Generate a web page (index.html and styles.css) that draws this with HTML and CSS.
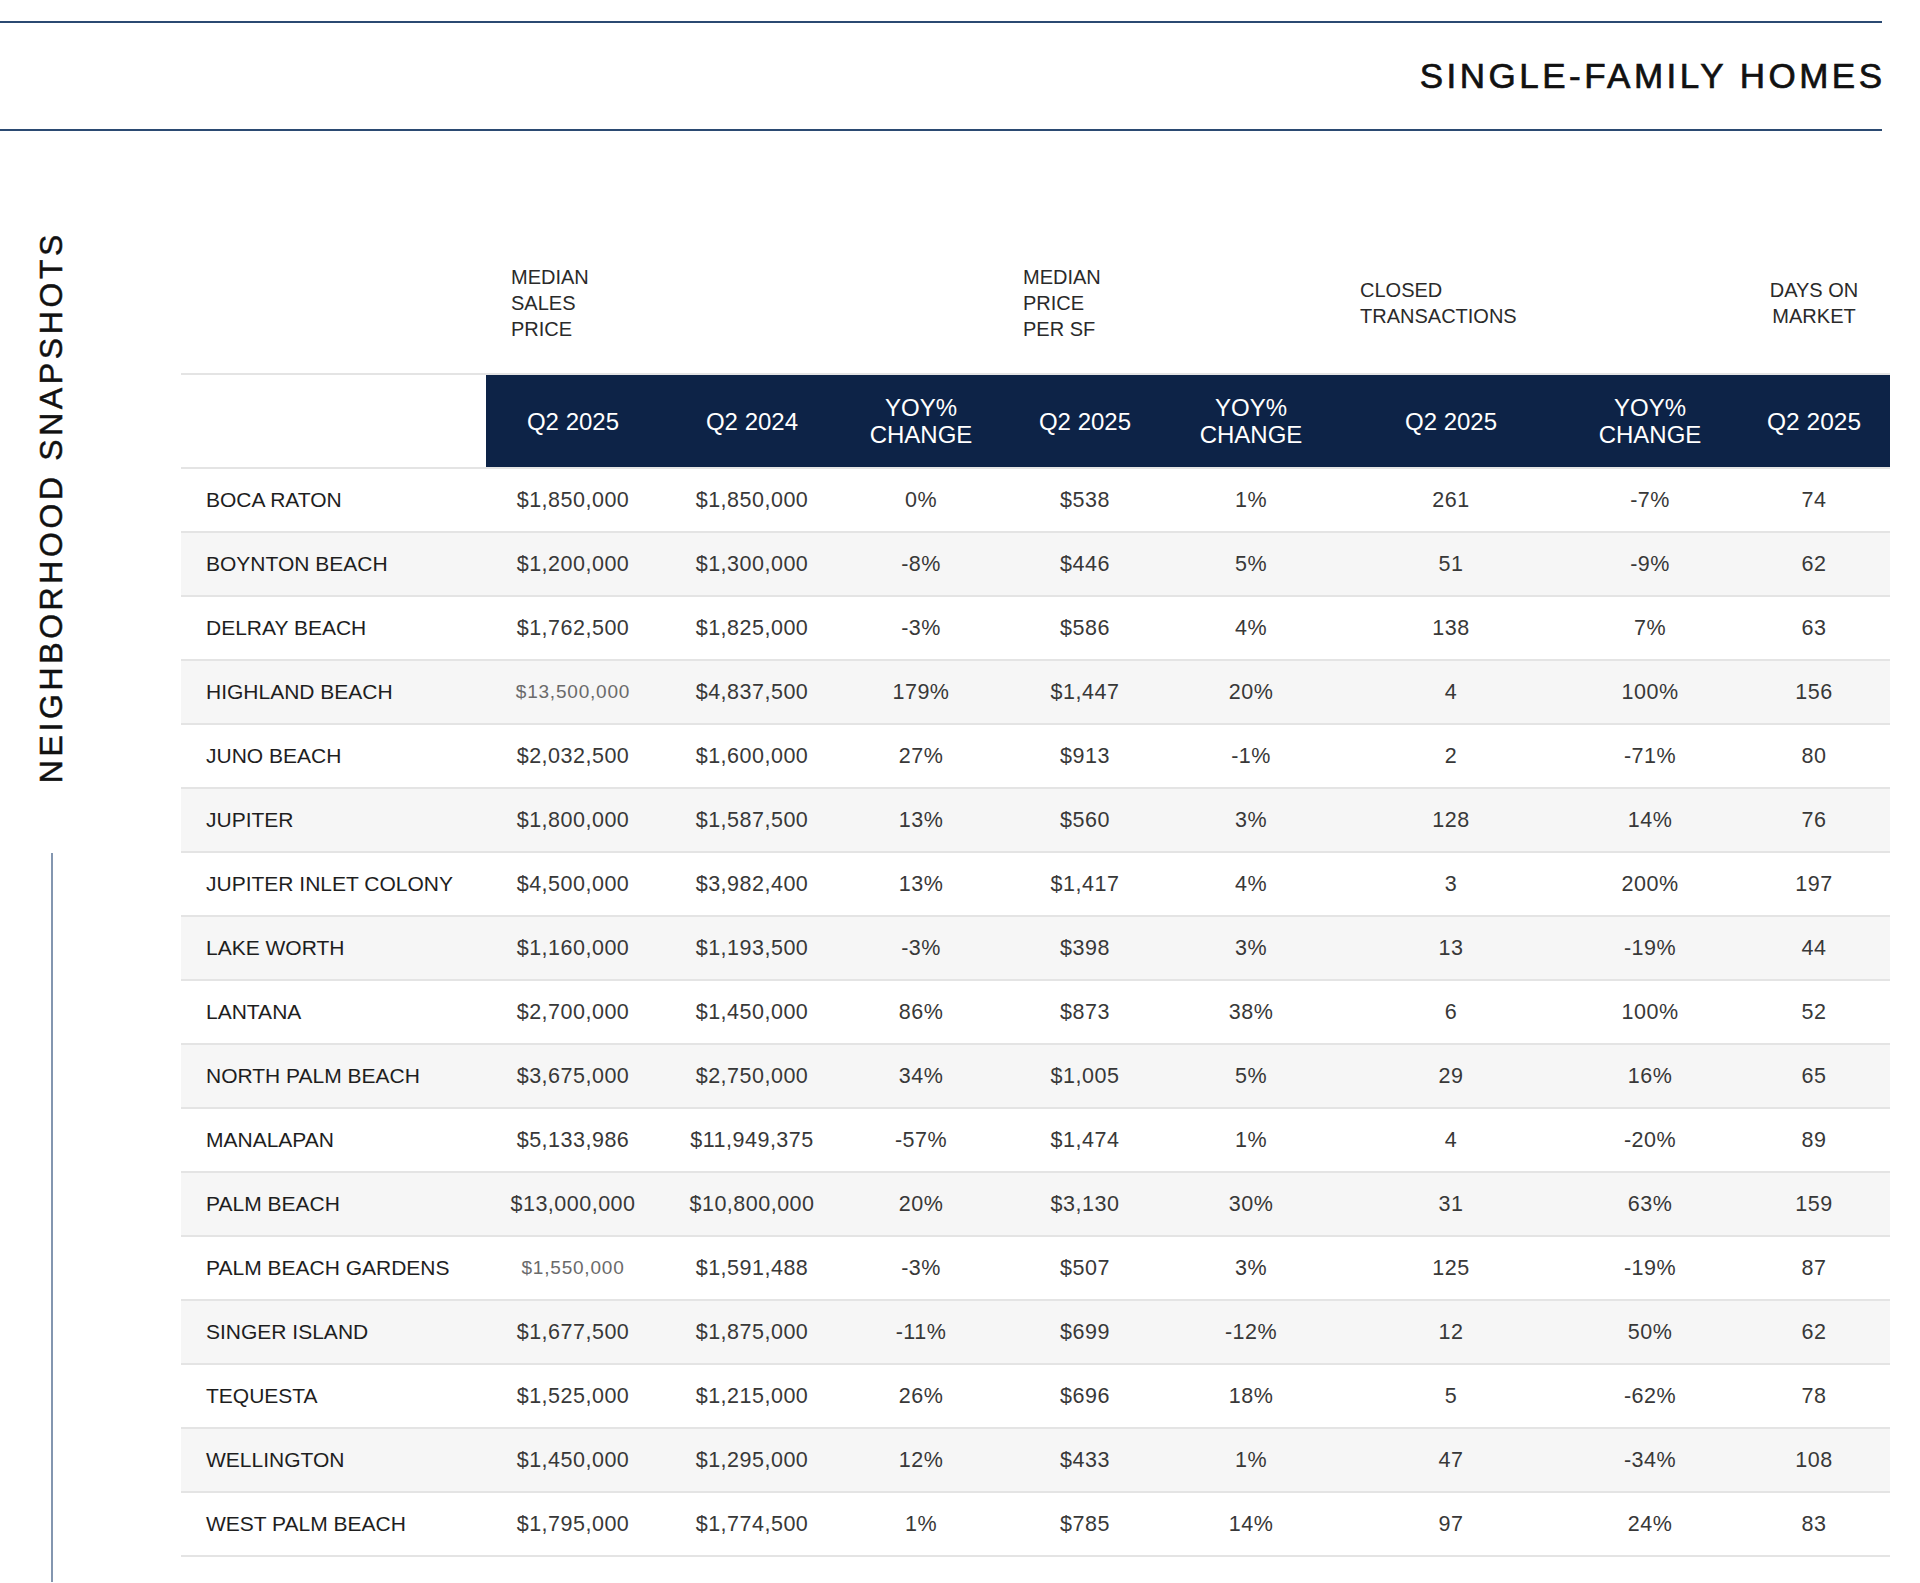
FILE: index.html
```html
<!DOCTYPE html>
<html lang="en">
<head>
<meta charset="utf-8">
<title>Single-Family Homes - Neighborhood Snapshots</title>
<link rel="stylesheet" href="styles.css">
</head>
<body>
<header class="topbar">
  <h1 class="title">SINGLE-FAMILY HOMES</h1>
</header>
<main class="main">
  <aside class="side">
    <div class="side-label">NEIGHBORHOOD SNAPSHOTS</div>
    <div class="side-rule"></div>
  </aside>
  <section class="area">
    <table class="snap">
      <colgroup>
        <col class="c-name">
        <col class="c-a">
        <col class="c-b">
        <col class="c-c">
        <col class="c-d">
        <col class="c-e">
        <col class="c-f">
        <col class="c-g">
        <col class="c-h">
      </colgroup>
      <thead>
        <tr class="groups">
          <th></th>
          <th colspan="3" class="grp">MEDIAN<br>SALES<br>PRICE</th>
          <th colspan="2" class="grp">MEDIAN<br>PRICE<br>PER SF</th>
          <th colspan="2" class="grp grp-closed">CLOSED<br>TRANSACTIONS</th>
          <th class="grp grp-c">DAYS ON<br>MARKET</th>
        </tr>
        <tr class="heads">
          <th class="blank"></th>
          <th>Q2 2025</th>
          <th>Q2 2024</th>
          <th>YOY%<br>CHANGE</th>
          <th>Q2 2025</th>
          <th>YOY%<br>CHANGE</th>
          <th>Q2 2025</th>
          <th>YOY%<br>CHANGE</th>
          <th class="last">Q2 2025</th>
        </tr>
      </thead>
      <tbody>
        <tr><td class="nm">BOCA RATON</td><td>$1,850,000</td><td>$1,850,000</td><td>0%</td><td>$538</td><td>1%</td><td>261</td><td>-7%</td><td class="last">74</td></tr>
        <tr><td class="nm">BOYNTON BEACH</td><td>$1,200,000</td><td>$1,300,000</td><td>-8%</td><td>$446</td><td>5%</td><td>51</td><td>-9%</td><td class="last">62</td></tr>
        <tr><td class="nm">DELRAY BEACH</td><td>$1,762,500</td><td>$1,825,000</td><td>-3%</td><td>$586</td><td>4%</td><td>138</td><td>7%</td><td class="last">63</td></tr>
        <tr><td class="nm">HIGHLAND BEACH</td><td class="sm">$13,500,000</td><td>$4,837,500</td><td>179%</td><td>$1,447</td><td>20%</td><td>4</td><td>100%</td><td class="last">156</td></tr>
        <tr><td class="nm">JUNO BEACH</td><td>$2,032,500</td><td>$1,600,000</td><td>27%</td><td>$913</td><td>-1%</td><td>2</td><td>-71%</td><td class="last">80</td></tr>
        <tr><td class="nm">JUPITER</td><td>$1,800,000</td><td>$1,587,500</td><td>13%</td><td>$560</td><td>3%</td><td>128</td><td>14%</td><td class="last">76</td></tr>
        <tr><td class="nm">JUPITER INLET COLONY</td><td>$4,500,000</td><td>$3,982,400</td><td>13%</td><td>$1,417</td><td>4%</td><td>3</td><td>200%</td><td class="last">197</td></tr>
        <tr><td class="nm">LAKE WORTH</td><td>$1,160,000</td><td>$1,193,500</td><td>-3%</td><td>$398</td><td>3%</td><td>13</td><td>-19%</td><td class="last">44</td></tr>
        <tr><td class="nm">LANTANA</td><td>$2,700,000</td><td>$1,450,000</td><td>86%</td><td>$873</td><td>38%</td><td>6</td><td>100%</td><td class="last">52</td></tr>
        <tr><td class="nm">NORTH PALM BEACH</td><td>$3,675,000</td><td>$2,750,000</td><td>34%</td><td>$1,005</td><td>5%</td><td>29</td><td>16%</td><td class="last">65</td></tr>
        <tr><td class="nm">MANALAPAN</td><td>$5,133,986</td><td>$11,949,375</td><td>-57%</td><td>$1,474</td><td>1%</td><td>4</td><td>-20%</td><td class="last">89</td></tr>
        <tr><td class="nm">PALM BEACH</td><td>$13,000,000</td><td>$10,800,000</td><td>20%</td><td>$3,130</td><td>30%</td><td>31</td><td>63%</td><td class="last">159</td></tr>
        <tr><td class="nm">PALM BEACH GARDENS</td><td class="sm">$1,550,000</td><td>$1,591,488</td><td>-3%</td><td>$507</td><td>3%</td><td>125</td><td>-19%</td><td class="last">87</td></tr>
        <tr><td class="nm">SINGER ISLAND</td><td>$1,677,500</td><td>$1,875,000</td><td>-11%</td><td>$699</td><td>-12%</td><td>12</td><td>50%</td><td class="last">62</td></tr>
        <tr><td class="nm">TEQUESTA</td><td>$1,525,000</td><td>$1,215,000</td><td>26%</td><td>$696</td><td>18%</td><td>5</td><td>-62%</td><td class="last">78</td></tr>
        <tr><td class="nm">WELLINGTON</td><td>$1,450,000</td><td>$1,295,000</td><td>12%</td><td>$433</td><td>1%</td><td>47</td><td>-34%</td><td class="last">108</td></tr>
        <tr><td class="nm">WEST PALM BEACH</td><td>$1,795,000</td><td>$1,774,500</td><td>1%</td><td>$785</td><td>14%</td><td>97</td><td>24%</td><td class="last">83</td></tr>
      </tbody>
    </table>
  </section>
</main>
</body>
</html>
```

FILE: styles.css
```css
html, body {
  margin: 0;
  padding: 0;
  background: #ffffff;
}
body {
  width: 1920px;
  height: 1583px;
  overflow: hidden;
  font-family: "Liberation Sans", Arial, sans-serif;
  color: #222;
}

.topbar {
  margin-top: 21px;
  width: 1882px;
  height: 106px;
  border-top: 2px solid #2b4a72;
  border-bottom: 2px solid #2b4a72;
  display: flex;
  align-items: center;
  justify-content: flex-end;
}
.title {
  margin: 0;
  font-size: 35px;
  font-weight: 400;
  letter-spacing: 3.5px;
  margin-right: -3.5px;
  color: #111;
  -webkit-text-stroke: 0.7px #111;
}

.main {
  display: flex;
  height: 1451px;
}
.side {
  width: 181px;
  flex: none;
  display: flex;
  flex-direction: column;
  align-items: flex-start;
}
.side-label {
  writing-mode: vertical-rl;
  transform: rotate(180deg);
  margin-left: 35px;
  margin-top: 100px;
  font-size: 32px;
  letter-spacing: 3.6px;
  line-height: 32px;
  color: #111;
  -webkit-text-stroke: 0.5px #111;
}
.side-rule {
  margin-top: 70px;
  margin-left: 51px;
  width: 2px;
  flex: 1;
  background: #8396b0;
}

.area {
  flex: none;
}
.snap {
  border-collapse: collapse;
  table-layout: fixed;
  width: 1709px;
  margin-top: 102px;
}
.c-name { width: 305px; }
.c-a { width: 174px; }
.c-b { width: 184px; }
.c-c { width: 154px; }
.c-d { width: 174px; }
.c-e { width: 158px; }
.c-f { width: 242px; }
.c-g { width: 156px; }
.c-h { width: 162px; }

.groups th {
  height: 140px;
  padding: 0;
  vertical-align: middle;
  text-align: left;
  font-weight: 400;
  font-size: 20px;
  line-height: 26px;
  color: #2a2a2a;
}
.groups th.grp {
  padding-left: 25px;
}
.groups th.grp-closed {
  padding-left: 30px;
}
.groups th.grp-c {
  text-align: center;
  padding-left: 10px;
}

.heads th {
  height: 92px;
  padding: 0;
  background: #0d2347;
  color: #fff;
  font-weight: 400;
  font-size: 24px;
  line-height: 27px;
  text-align: center;
  border-top: 2px solid #e4e4e4;
  border-bottom: 2px solid #e4e4e4;
}
.heads th.blank {
  background: #fff;
}
.heads th.last {
  padding-left: 10px;
  font-size: 24.5px;
}

.snap tbody tr:nth-child(even) td {
  background: #f6f6f6;
}
.snap td {
  height: 62px;
  padding: 0;
  border-bottom: 2px solid #e4e4e4;
  text-align: center;
  font-size: 21.5px;
  letter-spacing: 0.5px;
  color: #383838;
}
.snap td.last {
  padding-left: 10px;
}
.snap td.nm {
  text-align: left;
  padding-left: 25px;
  font-size: 21px;
  letter-spacing: 0;
  color: #1e1e1e;
}
.snap td.sm {
  font-size: 19px;
  letter-spacing: 0.8px;
  color: #6a6a6a;
}
```
